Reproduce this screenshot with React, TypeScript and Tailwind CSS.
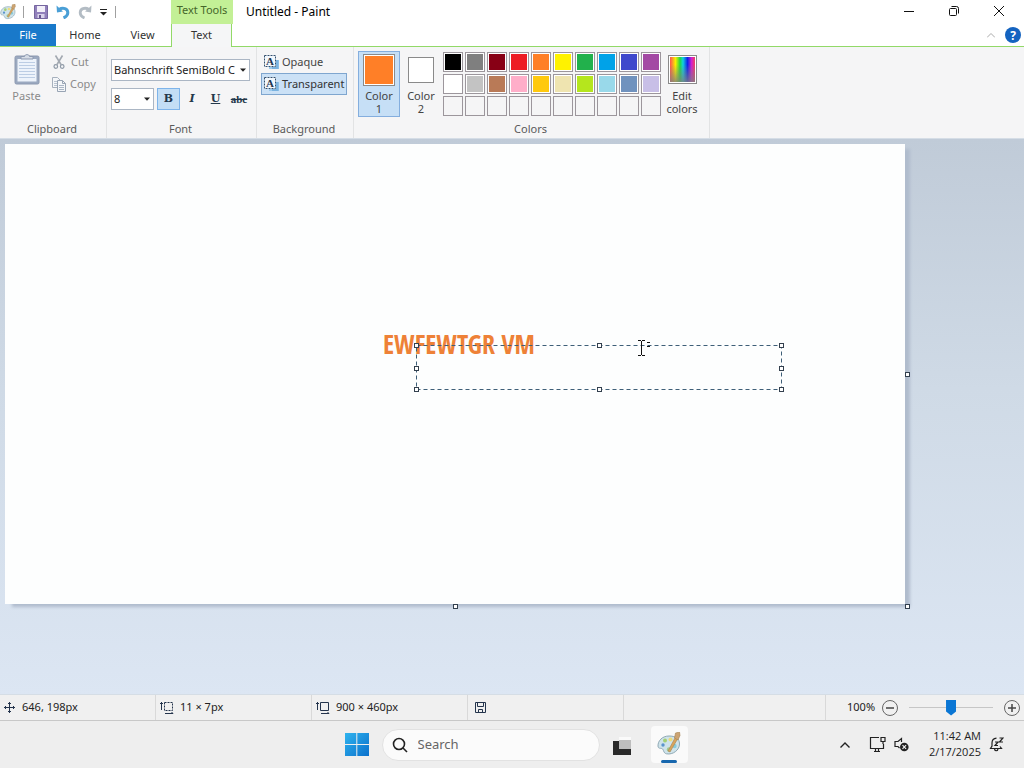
import React from "react";

const palette: string[][] = [
  ["#000000", "#7f7f7f", "#880015", "#ed1c24", "#ff7f27", "#fff200", "#22b14c", "#00a2e8", "#3f48cc", "#a349a4"],
  ["#ffffff", "#c3c3c3", "#b97a57", "#ffaec9", "#ffc90e", "#efe4b0", "#b5e61d", "#99d9ea", "#7092be", "#c8bfe7"],
  ["", "", "", "", "", "", "", "", "", ""],
];

function PaintIcon({ className }: { className: string }) {
  return (
    <svg viewBox="0 0 24 24" className={className} aria-hidden="true">
      <path d="M12 4C5 4 .8 9 1 14c.2 3 2.400 2 4 2.600 2 .8 1 4.400 4.500 5.200C16 23 22.500 18 22.500 12S18 4 12 4z" fill="#cfe3ea" stroke="#8fa9b5" strokeWidth="1" />
      <circle cx="6" cy="13" r="1.700" fill="#5a94cc" />
      <circle cx="8" cy="8.500" r="2" fill="#a3cf74" />
      <circle cx="13.500" cy="7.500" r="2" fill="#ecdc80" />
      <circle cx="17.500" cy="14" r="2.200" fill="#8accdc" />
      <circle cx="12" cy="17.500" r="2.200" fill="#a2cc90" />
      <path d="M11 19 18.500 5l2.500 1.200L13 20z" fill="#d9a45c" stroke="#a58352" strokeWidth=".6" />
      <path d="M17.500 6 18.500 1l4-1 .5 3.500L21 8z" fill="#cda473" stroke="#a58352" strokeWidth=".6" />
    </svg>
  );
}

function SaveIcon() {
  return (
    <svg viewBox="0 0 14 14" className="size-3.5" aria-hidden="true">
      <path d="M.5.500h13v13H.5z" fill="#9180bb" stroke="#75659f" />
      <path d="M3 1h8v6H3z" fill="#f2eff9" />
      <path d="M3.500 9h7v4h-7z" fill="#d8d2ea" />
      <path d="M5 10h2v3H5z" fill="#65558f" />
    </svg>
  );
}

function UndoIcon() {
  return (
    <svg viewBox="0 0 14 14" className="size-3.5" aria-hidden="true">
      <path d="M3 4.500C7 2 12 3.500 11.800 8c-.1 2.500-2 4-4.300 5" fill="none" stroke="#4a9fd6" strokeWidth="3" />
      <path d="M.5.500 1 7.500l6-1z" fill="#4a9fd6" />
    </svg>
  );
}

function RedoIcon() {
  return (
    <svg viewBox="0 0 14 14" className="size-3.5" aria-hidden="true">
      <path d="M11 4.500C7 2 2 3.500 2.200 8c.1 2.500 2 4 4.300 5" fill="none" stroke="#b3bcc4" strokeWidth="2.800" />
      <path d="M13.500.500 13 7.500l-6-1z" fill="#b3bcc4" />
    </svg>
  );
}

function PasteIcon() {
  return (
    <svg viewBox="0 0 26 32" className="h-8 w-[26px]" aria-hidden="true">
      <rect x="1" y="3" width="24" height="28" rx="1.500" fill="#9ba9c0" stroke="#8c99b0" />
      <path d="M3.500 6h19v22.500h-19z" fill="#edf3fb" />
      <path d="M5 9.500h16M5 12.500h16M5 15.500h16M5 18.500h16M5 21.500h16M5 24.500h16" stroke="#bccde4" />
      <path d="M7 6V3.500h3.500C10.500 1 15.500 1 15.500 3.500H19V6z" fill="#d5dce6" stroke="#8c99b0" />
    </svg>
  );
}

function CutIcon() {
  return (
    <svg viewBox="0 0 12 16" className="h-4 w-3" fill="none" aria-hidden="true">
      <path d="m2.500 1.500 5.500 9M9.500 1.500l-5.500 9" stroke="#a3a9b1" strokeWidth="1.600" />
      <circle cx="2.800" cy="12.500" r="1.800" stroke="#8e99a6" strokeWidth="1.200" />
      <circle cx="9.200" cy="12.500" r="1.800" stroke="#8e99a6" strokeWidth="1.200" />
    </svg>
  );
}

function CopyIcon() {
  return (
    <svg viewBox="0 0 16 16" className="size-4" aria-hidden="true">
      <path d="M1.500 1.500h5l3 3v7h-8z" fill="#f4f6f9" stroke="#a6b0bd" />
      <path d="M3 5.500h4M3 7.500h4M3 9.500h3" stroke="#b9c3d0" />
      <path d="M6.500 4.500h5l3 3v8h-8z" fill="#f4f6f9" stroke="#98a4b4" />
      <path d="M11.500 4.500v3h3" fill="none" stroke="#98a4b4" />
      <path d="M8 9.500h5M8 11.500h5M8 13.500h5" stroke="#aab6c6" />
    </svg>
  );
}

function LetterIcon() {
  return (
    <span className="relative flex size-4 items-center justify-center">
      <svg viewBox="0 0 16 16" className="absolute inset-0 size-4" aria-hidden="true">
        <path d="M9 6h7v9H6v-3z" fill="#9ccbee" />
        <path d="M1 1h12v12H1z" fill="#f2f7fc" />
        <path d="M9 15V13h4V6h2.500v9z" fill="#7bb3e0" />
        <path d="M1.500 1.500h11v11h-11z" fill="none" stroke="#35506e" strokeDasharray="2 1" />
      </svg>
      <span className="relative pr-0.5 pb-0.5 font-['Liberation_Serif',serif] text-[11px] leading-3 font-bold text-[#1d3450]" aria-hidden="true">A</span>
    </span>
  );
}

function DownArrow({ className }: { className: string }) {
  return (
    <svg viewBox="0 0 6 4" className={className} aria-hidden="true">
      <path d="M0 .500h6L3 3.700z" fill="#222" />
    </svg>
  );
}

function Group({ label, width, children }: { label: string; width: string; children: React.ReactNode }) {
  return (
    <section aria-label={label} className={`flex shrink-0 flex-col border-r border-[#e2e3e4] ${width}`}>
      <div className="flex flex-1 items-start">{children}</div>
      <h2 className="pr-0.5 pb-px text-center leading-4 text-[#5a5a5a]">{label}</h2>
    </section>
  );
}

function Handle({ className }: { className: string }) {
  return <span className={`absolute size-[5px] border border-[#33404e] bg-white ${className}`} />;
}

function StatusCell({ width, children }: { width: string; children?: React.ReactNode }) {
  return <div className={`flex items-center gap-1.5 border-r border-[#d9d9d9] ${width}`}>{children}</div>;
}

function TitleBar() {
  return (
    <div className="flex h-6">
      <div className="flex w-[171px] shrink-0 items-center">
        <PaintIcon className="size-4" />
        <span className="ml-[7px] h-3 w-px bg-[#a0a0a0]" />
        <button aria-label="Save" className="ml-2.5"><SaveIcon /></button>
        <button aria-label="Undo" className="ml-2"><UndoIcon /></button>
        <button aria-label="Redo" className="ml-2"><RedoIcon /></button>
        <button aria-label="Customize Quick Access Toolbar" className="ml-2">
          <svg viewBox="0 0 7 7" className="size-[7px]" aria-hidden="true">
            <path d="M0 .500h7" stroke="#222" />
            <path d="M0 3h7L3.500 6.500z" fill="#222" />
          </svg>
        </button>
        <span className="ml-2 h-3 w-px bg-[#a0a0a0]" />
      </div>
      <div className="flex w-[62px] shrink-0 items-center justify-center bg-[#c3f096] pb-1 text-[#45662a]">Text Tools</div>
      <h1 className="flex-1 pl-[13px] text-[12px] leading-6 text-black">Untitled - Paint</h1>
      <div className="flex pr-[3px] pb-[3px]">
        <button aria-label="Minimize" className="grid w-[45px] place-items-center">
          <svg viewBox="0 0 10 10" className="size-2.5" fill="none" stroke="#111"><path d="M0 5.500h10" /></svg>
        </button>
        <button aria-label="Restore" className="grid w-[45px] place-items-center">
          <svg viewBox="0 0 10 10" className="size-2.5" fill="none" stroke="#111">
            <rect x=".5" y="2.500" width="7" height="7" rx="1" />
            <path d="M2.500.500h5a2 2 0 0 1 2 2v5" />
          </svg>
        </button>
        <button aria-label="Close" className="grid w-[45px] place-items-center">
          <svg viewBox="0 0 10 10" className="size-2.5" fill="none" stroke="#111"><path d="m0 0 10 10M10 0 0 10" /></svg>
        </button>
      </div>
    </div>
  );
}

function Tabs() {
  return (
    <nav className="flex h-[23px] border-b border-[#92d968] text-[#333]">
      <button className="w-14 bg-[#1979ca] text-white">File</button>
      <button className="w-[58px]">Home</button>
      <button className="w-[57px]">View</button>
      <button className="-mb-px w-[61px] border-x border-[#92d968] bg-[#f5f6f7]">Text</button>
      <div className="flex flex-1 items-center justify-end gap-1.5 pr-[3px]">
        <button aria-label="Collapse ribbon" className="p-1">
          <svg viewBox="0 0 8 5" className="h-[5px] w-2" fill="none" stroke="#aaa"><path d="m0 4.500 4-4 4 4" /></svg>
        </button>
        <button aria-label="Help" className="grid size-4 place-items-center rounded-full bg-[#1463c0] text-[12px] font-bold text-white">?</button>
      </div>
    </nav>
  );
}

function Ribbon() {
  return (
    <div className="flex h-[92px] border-b border-[#d5dde6] bg-[#f5f5f6]">
      <Group label="Clipboard" width="w-[107px]">
        <button className="mt-1.5 ml-3 flex w-[29px] flex-col items-center text-[#8a8a8a]">
          <PasteIcon />
          <span className="mt-[3px] leading-4">Paste</span>
        </button>
        <div className="mt-1 ml-2.5 flex flex-col text-[#8a8a8a]">
          <button className="flex h-[22px] items-center gap-1.5 pl-0.5"><CutIcon />Cut</button>
          <button className="flex h-[22px] items-center gap-[3px]"><CopyIcon />Copy</button>
        </div>
      </Group>
      <Group label="Font" width="w-[150px]">
        <div className="ml-1 flex flex-col gap-[7px] pt-3">
          <div className="relative w-[139px]">
            <select aria-label="Font family" className="h-[22px] w-full appearance-none border border-[#abb6c4] bg-white pr-3 pl-0.5 text-[#222]">
              <option>Bahnschrift SemiBold C</option>
            </select>
            <DownArrow className="pointer-events-none absolute top-[9px] right-1 h-1 w-1.5" />
          </div>
          <div className="flex">
            <div className="relative w-[43px]">
              <select aria-label="Font size" className="h-[22px] w-full appearance-none border border-[#abb6c4] bg-white pl-0.5 text-[#222]">
                <option>8</option>
              </select>
              <DownArrow className="pointer-events-none absolute top-[9px] right-1 h-1 w-1.5" />
            </div>
            <div className="ml-[3px] flex font-['DejaVu_Serif',serif] text-[11px] font-bold text-[#24384a]">
              <button aria-pressed="true" className="h-[22px] w-[23px] border border-[#7eb4ea] bg-[#c3def5]">B</button>
              <button className="h-[22px] w-6 italic">I</button>
              <button className="h-[22px] w-[23px] underline">U</button>
              <button className="h-[22px] w-6 font-['Liberation_Serif',serif] line-through">abc</button>
            </div>
          </div>
        </div>
      </Group>
      <Group label="Background" width="w-[97px]">
        <div className="mt-1 ml-1 flex w-[86px] flex-col text-[#444]">
          <button className="flex h-[22px] items-center gap-[3px] border border-transparent pl-px"><LetterIcon />Opaque</button>
          <button aria-pressed="true" className="flex h-[22px] items-center gap-[3px] border border-[#7fa6cf] bg-[#cbe1f6] pl-px text-[#333]"><LetterIcon />Transparent</button>
        </div>
      </Group>
      <Group label="Colors" width="w-[356px]">
        <button aria-pressed="true" className="mt-1 ml-1 flex h-[66px] w-[42px] flex-col items-center border border-[#84aede] bg-[#c6dff6] pt-0.5 leading-[13px] text-[#444]">
          <span className="mb-[3px] size-8 border border-[#8a8a8a] bg-[#ff7f27] ring-1 ring-white ring-inset" />
          Color<br />1
        </button>
        <button className="mt-1 flex h-[66px] w-[42px] flex-col items-center pt-1.5 leading-[13px] text-[#444]">
          <span className="mb-1.5 size-[26px] border border-[#8a8a8a] bg-white" />
          Color<br />2
        </button>
        <div className="mt-[5px] ml-px grid grid-cols-10 gap-0.5">
          {palette.flat().map((color, i) => (
            <button
              key={i}
              aria-label={color || "Empty color"}
              className={`size-5 border border-[#9c969c] p-px ${color ? "bg-white" : "bg-[#f5f5f6]"}`}
            >
              <span className="block size-full" style={{ backgroundColor: color || undefined }} />
            </button>
          ))}
        </div>
        <button className="mt-2 ml-[3px] flex w-9 flex-col items-center leading-[13px] text-[#444]">
          <span className="mb-[5px] size-[29px] border border-[#8a8a8a] bg-white p-px">
            <span className="block size-full bg-[linear-gradient(to_bottom,transparent_30%,#7f7f7fcc),linear-gradient(to_right,#ff5050,#f8f000_22%,#20d840_40%,#10d0e0_52%,#1020e8_70%,#d020d0_86%,#f04060)]" />
          </span>
          Edit<br />colors
        </button>
      </Group>
    </div>
  );
}

function Workspace() {
  return (
    <main className="flex-1 overflow-hidden bg-linear-to-b from-[#c0cbd8] via-[#cfdae6] via-45% to-[#dce6f3] pt-[5px] pl-[5px]">
      <div className="relative h-[460px] w-[900px] bg-[#fdfefe] shadow-[6px_4px_3px_-1px_#b0bccd]">
        <p className="absolute top-[182px] left-[378px] font-['Open_Sans_Condensed','Roboto_Condensed',sans-serif] text-[26px] leading-9 font-bold whitespace-nowrap text-[#ee8137]">EWFEWTGR VM</p>
        <svg viewBox="0 0 366 45" className="absolute top-[201px] left-[411px] h-[45px] w-[366px]" aria-hidden="true">
          <path d="M.5.500h365v44H.5z" fill="none" stroke="#3e5f78" strokeDasharray="4 3" />
        </svg>
        <Handle className="top-[199px] left-[409px]" />
        <Handle className="top-[199px] left-[592px]" />
        <Handle className="top-[199px] left-[774px]" />
        <Handle className="top-[222px] left-[409px]" />
        <Handle className="top-[222px] left-[774px]" />
        <Handle className="top-[243px] left-[409px]" />
        <Handle className="top-[243px] left-[592px]" />
        <Handle className="top-[243px] left-[774px]" />
        <svg viewBox="0 0 16 17" className="absolute top-[195px] left-[632px] h-[17px] w-4" fill="none" stroke="#111" aria-hidden="true">
          <path d="M1 1.500h3M5 1.500h3M1 16.500h3M5 16.500h3M4.500 2v14" />
          <path d="M10 3.500h4M10 7.500h4" strokeDasharray="3 1" />
        </svg>
        <Handle className="top-[228px] -right-[5px]" />
        <Handle className="-right-[5px] -bottom-[5px]" />
        <Handle className="-bottom-[5px] left-[448px]" />
      </div>
    </main>
  );
}

function StatusBar() {
  return (
    <footer className="flex h-[26px] border-t border-[#d5dde5] bg-[#f0f0f0] text-[#222]">
      <StatusCell width="w-[156px] pl-1">
        <svg viewBox="0 0 12 12" className="size-3" fill="none" stroke="#24344c" aria-hidden="true">
          <path d="M5.500 0v11M0 5.500h11M4 2l1.500-1.500L7 2M4 9l1.500 1.500L7 9M2 4 .500 5.500 2 7M9 4l1.500 1.500L9 7" />
        </svg>
        646, 198px
      </StatusCell>
      <StatusCell width="w-[156px] pl-1">
        <svg viewBox="0 0 14 12" className="h-3 w-3.5" fill="none" stroke="#24344c" aria-hidden="true">
          <path d="M1.500 0v8M0 2l1.500-1.500L3 2M5 11.500h8M11.500 10l1.500 1.500" />
          <path d="M4.500.500h8v8h-8z" strokeDasharray="2 1" />
        </svg>
        11 × 7px
      </StatusCell>
      <StatusCell width="w-[156px] pl-1">
        <svg viewBox="0 0 14 12" className="h-3 w-3.5" fill="none" stroke="#24344c" aria-hidden="true">
          <path d="M1.500 0v8M0 2l1.500-1.500L3 2M5 11.500h8M11.500 10l1.500 1.500M4.500.500h8v8h-8z" />
        </svg>
        900 × 460px
      </StatusCell>
      <StatusCell width="w-[156px] pl-[7px]">
        <svg viewBox="0 0 11 11" className="size-[11px]" fill="none" stroke="#24344c" aria-label="Saved" role="img">
          <path d="M.500.500h10v10H.500zM2.500.500v4h6v-4M3.500 10.500v-3h4v3" />
        </svg>
      </StatusCell>
      <StatusCell width="flex-1" />
      <div className="flex w-[198px] items-center pl-[21px]">
        <label htmlFor="zoom">100%</label>
        <button aria-label="Zoom out" className="ml-[7px] grid size-4 place-items-center rounded-full border border-[#666]">
          <svg viewBox="0 0 8 8" className="size-2" stroke="#444" strokeWidth="1.500"><path d="M0 4h8" /></svg>
        </button>
        <input
          id="zoom"
          type="range"
          defaultValue={50}
          className="mx-[11px] h-4 w-[84px] appearance-none bg-[linear-gradient(#c6c6c6,#c6c6c6)] bg-[length:100%_1px] bg-center bg-no-repeat [&::-webkit-slider-thumb]:h-4 [&::-webkit-slider-thumb]:w-2.5 [&::-webkit-slider-thumb]:appearance-none [&::-webkit-slider-thumb]:bg-[#0a76d4] [&::-webkit-slider-thumb]:[clip-path:polygon(0_0,100%_0,100%_75%,50%_100%,0_75%)]"
        />
        <button aria-label="Zoom in" className="grid size-4 place-items-center rounded-full border border-[#666]">
          <svg viewBox="0 0 8 8" className="size-2" stroke="#444" strokeWidth="1.500"><path d="M0 4h8M4 0v8" /></svg>
        </button>
      </div>
    </footer>
  );
}

function Taskbar() {
  return (
    <div className="grid h-12 grid-cols-[1fr_auto_1fr] items-center border-t border-[#c8c8c8] bg-[#eeeeee]">
      <div />
      <div className="flex items-center pl-2">
        <button aria-label="Start">
          <svg viewBox="0 0 24 24" className="size-6">
            <defs>
              <linearGradient id="start" x1="0" y1="0" x2="24" y2="24" gradientUnits="userSpaceOnUse">
                <stop offset="0" stopColor="#2fb3ee" />
                <stop offset="1" stopColor="#0a6fcb" />
              </linearGradient>
            </defs>
            <path d="M0 0h11.300v11H0zM12.300 0H24v11H12.300zM0 12h11.300v11H0zM12.300 12H24v11H12.300z" fill="url(#start)" />
          </svg>
        </button>
        <label className="ml-[13px] flex h-8 w-[218px] items-center rounded-full border border-[#e2e2e2] bg-[#fbfbfb] pl-[9px]">
          <svg viewBox="0 0 16 16" className="size-4 shrink-0" fill="none" stroke="#222" strokeWidth="1.600" aria-hidden="true">
            <circle cx="7" cy="7" r="5.500" />
            <path d="m11 11 4 4" />
          </svg>
          <input aria-label="Search" placeholder="Search" className="ml-2.5 w-40 bg-transparent text-[13px] outline-none placeholder:text-[#666]" />
        </label>
        <button aria-label="Task view" className="ml-3 pt-0.5">
          <svg viewBox="0 0 20 20" className="size-5">
            <path d="M7 1h12v12H7z" fill="#fafafa" />
            <path d="M1 5h18v14H1z" fill="#292929" />
            <path d="M7 4h12v9H7z" fill="#bdbdbd" />
          </svg>
        </button>
        <button aria-label="Paint" className="ml-[19px] flex h-[37px] w-[37px] flex-col items-center justify-between rounded-sm bg-[#fafafa] pt-1.5">
          <PaintIcon className="size-6" />
          <span className="h-[3px] w-4 rounded-full bg-[#1767ae]" />
        </button>
      </div>
      <div className="flex items-center justify-end pr-5 text-[#222]">
        <button aria-label="Show hidden icons">
          <svg viewBox="0 0 10 6" className="h-1.5 w-2.5" fill="none" stroke="#222" strokeWidth="1.400"><path d="m.5 5.500 4.500-4.500 4.500 4.500" /></svg>
        </button>
        <button aria-label="Network" className="ml-[19px]">
          <svg viewBox="0 0 17 17" className="size-[17px]" fill="none" stroke="#222" strokeWidth="1.200">
            <path d="M10 1.500H1.500v11h13V8M5 15.500h6M6.500 12.500v3M9.500 12.500v3" />
            <path d="M12 1.500h4v4h-4zM14 5.500V8" />
          </svg>
        </button>
        <button aria-label="Volume muted" className="ml-2">
          <svg viewBox="0 0 15 15" className="size-[15px]" fill="none" stroke="#222" strokeWidth="1.200">
            <path d="M7.500 5V1.500L4 4.500H1v5h3l1.500 1.500" />
            <circle cx="10.300" cy="10" r="4.300" fill="#222" stroke="none" />
            <path d="m8.500 8.200 3.600 3.600M12.100 8.200l-3.600 3.600" stroke="#eee" />
          </svg>
        </button>
        <button className="ml-5 pb-0.5 text-right font-['Open_Sans',sans-serif] text-[11px] leading-4">11:42 AM<br />2/17/2025</button>
        <button aria-label="Notifications, do not disturb" className="ml-2">
          <svg viewBox="0 0 15 15" className="size-[15px]" fill="none" stroke="#222" strokeWidth="1.200">
            <path d="M7.500 1.200C4.500 1.500 3 3.500 3 6v3L1.500 11.500h11L11 9.500M5.500 12c.5 2.300 3 2.300 3.500 0" />
            <path d="M10.500 1h3.500l-3.500 4H14M6 5h3L6 8.500h3" />
          </svg>
        </button>
      </div>
    </div>
  );
}

export default function App() {
  return (
    <div className="flex min-h-screen flex-col bg-white font-['Noto_Sans','Open_Sans',sans-serif] text-[11px]">
      <header>
        <TitleBar />
        <Tabs />
        <Ribbon />
      </header>
      <Workspace />
      <StatusBar />
      <Taskbar />
    </div>
  );
}
